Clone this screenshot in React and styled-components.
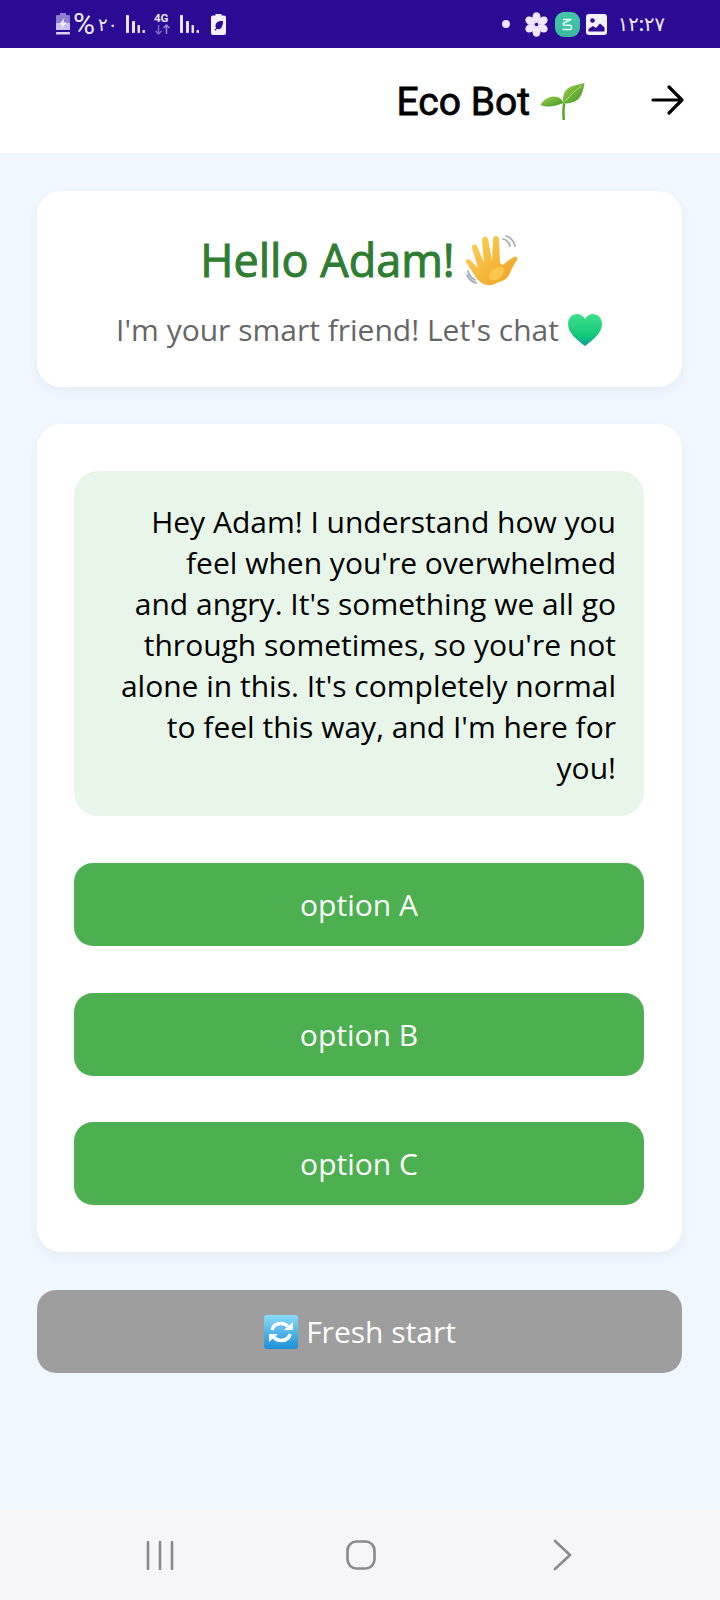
import React from "react";
import styled, { createGlobalStyle } from "styled-components";

const Global = createGlobalStyle`
  html, body { margin: 0; padding: 0; background: #f0f7ff; }
  * { box-sizing: border-box; }
  #root { width: 720px; height: 1600px; }
`;
const Page = styled.div`
  width: 720px; height: 1600px; display: flex; flex-direction: column;
  background: #f0f7ff; font-family: "Open Sans", sans-serif;
`;
const StatusBar = styled.div`
  height: 48px; flex: none; background: #2b0a94; color: #f1ecff;
  display: flex; align-items: center; justify-content: space-between;
  padding: 0 55px 0 55px; font-family: "Roboto", sans-serif;
`;
const StatusGroup = styled.div`
  display: flex; align-items: center;
`;
const Slot = styled.span`
  display: flex; align-items: center; margin-left: ${p => p.$ml || 0}px;
`;
const Percent = styled.span`
  font-size: 30px; line-height: 48px; font-family: "Roboto", sans-serif; margin-left: 2px;
`;
const Digits = styled.span`
  font-size: ${p => p.$size || 18}px; line-height: 48px; font-family: "Noto Sans", "DejaVu Sans", sans-serif;
  margin-left: ${p => p.$ml || 0}px; font-weight: 500;
`;
const Header = styled.header`
  height: 105px; flex: none; background: #fff;
  display: flex; align-items: center; justify-content: flex-end; padding: 0 35px 2px 0;
`;
const Title = styled.h1`
  margin: 4px 65px 0 0; font: 400 39px/48px "Roboto", sans-serif; color: #000;
  -webkit-text-stroke: 0.8px #000;
  display: flex; align-items: center; gap: 9px;
`;
const Main = styled.main`
  flex: 1; padding: 38px 38px 0 37px; display: flex; flex-direction: column; gap: 37px;
`;
const Card = styled.section`
  background: #fff; border-radius: 24px; box-shadow: 0 4px 12px rgba(0,0,0,.05);
`;
const Welcome = styled(Card)`
  height: 196px; display: flex; flex-direction: column; align-items: center; padding-top: 38px;
`;
const Hello = styled.h2`
  margin: 0; font: 400 45px/62px "Open Sans", sans-serif; color: #2e7d32;
  -webkit-text-stroke: 1px #2e7d32;
  display: flex; align-items: center; gap: 10px;
`;
const Sub = styled.p`
  margin: 19px 0 0; font: 400 30px/40px "Open Sans", sans-serif; color: #666;
  display: flex; align-items: center; gap: 8px;
`;
const Chat = styled(Card)`
  padding: 47px 38px 47px 37px; display: flex; flex-direction: column; gap: 47px;
`;
const Bubble = styled.div`
  background: #e8f5e9; border-radius: 24px; padding: 30px 28px 28px 29px;
  font: 400 30px/41px "Open Sans", sans-serif; color: #000; text-align: right;
`;
const Options = styled.div`
  display: flex; flex-direction: column; gap: 47px;
`;
const Option = styled.button`
  height: 83px; border: 0; border-radius: 19px; background: #4caf50; color: #fff;
  font: 400 30px/40px "Open Sans", sans-serif; width: 100%; padding: 0;
  &:last-child { margin-top: -1px; }
`;
const Reset = styled.button`
  height: 83px; border: 0; border-radius: 19px; background: #9e9e9e; color: #fff; margin-top: 1px;
  font: 400 30px/40px "Open Sans", sans-serif; width: 100%;
  display: flex; align-items: center; justify-content: center; gap: 7px; padding: 0;
`;
const NavBar = styled.nav`
  height: 90px; flex: none; background: #f6f6f9;
  display: flex; align-items: center; padding: 0 0 0 146px;
`;
const NavSlot = styled.div`
  display: flex; align-items: center; margin-right: ${p => p.$mr || 0}px;
`;

const Battery = () => (
  <svg width="16" height="24" viewBox="0 0 16 24">
    <path d="M5 1h6v2h3a1.500 1.500 0 0 1 1 1.500V18H1V4.500A1.500 1.500 0 0 1 2 3h3z" fill="#8f7fd0" />
    <path d="M1 11h14v7H1z" fill="#c9c0ee" />
    <path d="M9.500 6 4 12.500h3.500L6 17l6-6.500H8.500z" fill="#f4f0ff" />
    <rect x="1" y="20" width="14" height="2.500" rx=".6" fill="#d9d2f5" />
  </svg>
);
const Signal = () => (
  <svg width="19" height="20" viewBox="0 0 19 20" fill="#e9e4fb">
    <rect x="0" y="1" width="3" height="18" rx=".8" />
    <rect x="6" y="7" width="3" height="12" rx=".8" />
    <rect x="11.500" y="11" width="2.500" height="8" rx=".8" />
    <rect x="16.500" y="16" width="2.500" height="3" rx=".8" />
  </svg>
);
const FourG = () => (
  <svg width="18" height="24" viewBox="0 0 18 24">
    <text x="0" y="10" fontSize="11.500" fontWeight="700" fontFamily="Roboto, sans-serif" fill="#ece7fc">4G</text>
    <path d="M4.500 13v9M1.500 19l3 3 3-3" fill="none" stroke="#7d67c6" strokeWidth="1.500" />
    <path d="M12.500 22v-9M9.500 16l3-3 3 3" fill="none" stroke="#9a88d6" strokeWidth="1.500" />
  </svg>
);
const LeafBattery = () => (
  <svg width="15" height="21" viewBox="0 0 15 21">
    <path d="M4.500 0h6v1.500h2.500a2 2 0 0 1 2 2V19a2 2 0 0 1-2 2H2a2 2 0 0 1-2-2V3.500a2 2 0 0 1 2-2h2.500z" fill="#f4f0ff" />
    <path d="M12 7c-4.500-.3-7.500 1.300-7.500 5 0 .8.200 1.500.6 2l-1.600 2 .8.700 1.600-2c2.800 1.500 6.100-.5 6.100-7.700z" fill="#2b0a94" />
  </svg>
);
const Flower = () => (
  <svg width="25" height="25" viewBox="0 0 25 25" fill="#ece7fc">
    {[0, 60, 120, 180, 240, 300].map(a => (
      <ellipse key={a} cx="12.500" cy="5" rx="4" ry="4.800" transform={`rotate(${a} 12.500 12.500)`} />
    ))}
    <circle cx="12.500" cy="12.500" r="3.500" fill="#ece7fc" />
    <circle cx="12.500" cy="12.500" r="1.800" fill="#2b0a94" />
  </svg>
);
const Sapp = () => (
  <svg width="25" height="25" viewBox="0 0 25 25">
    <defs>
      <linearGradient id="sapp" x1="0" y1="0" x2="0" y2="1">
        <stop offset="0" stopColor="#43c7a8" /><stop offset="1" stopColor="#3bb89f" />
      </linearGradient>
    </defs>
    <rect width="25" height="25" rx="9" fill="url(#sapp)" />
    <path d="M8 7.500h8.500M16 7.500 9 11c-1.500.8-.8 2.300.5 2.300h5c2.800 0 2.800 4.200 0 4.200H7.500" fill="none" stroke="#e6fff7" strokeWidth="1.500" strokeLinejoin="round" />
  </svg>
);
const Gallery = () => (
  <svg width="21" height="21" viewBox="0 0 21 21">
    <rect width="21" height="21" rx="3" fill="#f4f0ff" />
    <circle cx="6.500" cy="6.500" r="2.300" fill="#2b0a94" />
    <path d="M2.500 17.500v-2.500l4.500-3 3 2 4-4.500 4.500 4v4z" fill="#2b0a94" />
  </svg>
);
const Arrow = () => (
  <svg width="34" height="34" viewBox="0 0 34 34" fill="none" stroke="#000" strokeWidth="3.200" strokeLinecap="round" strokeLinejoin="round">
    <path d="M2 17h29M18 4l13 13-13 13" />
  </svg>
);
const Sprout = () => (
  <svg width="47" height="40" viewBox="0 0 46 40">
    <defs>
      <linearGradient id="lf" x1="0" y1="0" x2="1" y2="1">
        <stop offset="0" stopColor="#9ed24a" /><stop offset="1" stopColor="#3f9428" />
      </linearGradient>
    </defs>
    <path d="M23 38c-.5-6-.5-12 .5-17l2.500.5c-1 5-1 11-.3 16.500z" fill="#5ba52f" />
    <path d="M1 23c3-6 10-10 17-8 3 1 5 3 6 6-7 3-16 5-23 2z" fill="url(#lf)" />
    <path d="M24 21c-2-8 2-15 9-17 4-1 8-2 12-3-1 7-3 15-9 18-4 2-8 3-12 2z" fill="url(#lf)" />
    <path d="M26 19C31 13 36 8 43 3" stroke="#cdea80" strokeWidth=".8" fill="none" />
  </svg>
);
const Wave = () => (
  <svg width="54" height="52" viewBox="0 0 54 52">
    <defs>
      <linearGradient id="hand" x1="0" y1="0" x2="1" y2="1">
        <stop offset="0" stopColor="#fdd35a" /><stop offset="1" stopColor="#f0a020" />
      </linearGradient>
    </defs>
    <path d="M38 5c4 1 6 3 7 7M41 2c4 1 8 5 9 10" fill="none" stroke="#a5a8b6" strokeWidth="1.800" strokeLinecap="round" />
    <path d="M3 37c1 4 3 7 7 9M2 41c2 4 5 7 9 8" fill="none" stroke="#a5a8b6" strokeWidth="1.800" strokeLinecap="round" />
    <path d="M27 51c-8 1-13-3-17-9L1 28c-1-2 2-4 4-2l8 8L7 14c-1-3 3-5 5-2l7 17-2-23c0-4 5-4 6-1l4 22 1-22c0-4 6-4 6 0l1 24 3 2c3-3 7-6 11-8 3-1 4 1 3 3-4 6-6 10-8 15-2 4-6 6-10 7z" fill="url(#hand)" />
    <path d="M32 46c-5 1-9-1-8-5 1-5 8-9 13-8 3 1 2 7-1 10z" fill="#fbc94f" opacity=".9" />
  </svg>
);
const Heart = () => (
  <svg width="36" height="34" viewBox="0 0 36 34">
    <defs>
      <linearGradient id="ht" x1="0" y1="0" x2="0" y2="1">
        <stop offset="0" stopColor="#3fe08c" /><stop offset=".7" stopColor="#10c878" /><stop offset="1" stopColor="#1098a0" />
      </linearGradient>
    </defs>
    <path d="M18 33C10 27 1 20 1 11 1 5 5 1 10 1c3.500 0 6.500 2 8 5 1.500-3 4.500-5 8-5 5 0 9 4 9 10 0 9-9 16-17 22z" fill="url(#ht)" />
  </svg>
);
const Refresh = () => (
  <svg width="36" height="36" viewBox="0 0 36 36">
    <defs>
      <linearGradient id="rf" x1="0" y1="0" x2="0" y2="1">
        <stop offset="0" stopColor="#8bdcf7" /><stop offset="1" stopColor="#1c8fd6" />
      </linearGradient>
    </defs>
    <rect x="1" y="1" width="34" height="34" rx="3" fill="url(#rf)" />
    <path d="M9 16c1-4.500 5-6.500 9-6.500 3 0 5 1 7 3" fill="none" stroke="#fff" strokeWidth="3.500" />
    <path d="M21 16h9V8z" fill="#fff" />
    <path d="M27 20c-1 4.500-5 6.500-9 6.500-3 0-5-1-7-3" fill="none" stroke="#fff" strokeWidth="3.500" />
    <path d="M15 20H6v8z" fill="#fff" />
  </svg>
);
const Bars = () => (
  <svg width="28" height="30" viewBox="0 0 28 30" stroke="#8a8a8a" strokeWidth="2.600" strokeLinecap="round">
    <path d="M2 2v27M14 2v27M26 2v27" />
  </svg>
);
const HomeIcon = () => (
  <svg width="30" height="30" viewBox="0 0 30 30" fill="none" stroke="#8a8a8a" strokeWidth="2.600">
    <rect x="1.500" y="1.500" width="27" height="27" rx="9" />
  </svg>
);
const Chevron = () => (
  <svg width="20" height="32" viewBox="0 0 20 32" fill="none" stroke="#8a8a8a" strokeWidth="2.600" strokeLinecap="round" strokeLinejoin="round">
    <path d="M3 2l15 14L3 30" />
  </svg>
);

export default function App() {
  return (
    <Page>
      <Global />
      <StatusBar>
        <StatusGroup>
          <Slot><Battery /></Slot>
          <Percent>%</Percent>
          <Digits $ml={3}>۲۰</Digits>
          <Slot $ml={9}><Signal /></Slot>
          <Slot $ml={9}><FourG /></Slot>
          <Slot $ml={8}><Signal /></Slot>
          <Slot $ml={12}><LeafBattery /></Slot>
        </StatusGroup>
        <StatusGroup>
          <svg width="8" height="8" viewBox="0 0 8 8"><circle cx="4" cy="4" r="4" fill="#ece7fc" /></svg>
          <Slot $ml={14}><Flower /></Slot>
          <Slot $ml={6}><Sapp /></Slot>
          <Slot $ml={6}><Gallery /></Slot>
          <Digits $size={19.500} $ml={11}>۱۲:۲۷</Digits>
        </StatusGroup>
      </StatusBar>
      <Header>
        <Title>Eco Bot <Sprout /></Title>
        <Arrow />
      </Header>
      <Main>
        <Welcome>
          <Hello>Hello Adam! <Wave /></Hello>
          <Sub>I'm your smart friend! Let's chat <Heart /></Sub>
        </Welcome>
        <Chat>
          <Bubble>
            Hey Adam! I understand how you feel when you're overwhelmed<br />and angry. It's something we all go through sometimes, so you're not alone in this. It's completely normal to feel this way, and I'm here for you!
          </Bubble>
          <Options>
            <Option>option A</Option>
            <Option>option B</Option>
            <Option>option C</Option>
          </Options>
        </Chat>
        <Reset><Refresh /> Fresh start</Reset>
      </Main>
      <NavBar>
        <NavSlot $mr={172}><Bars /></NavSlot>
        <NavSlot $mr={176}><HomeIcon /></NavSlot>
        <NavSlot><Chevron /></NavSlot>
      </NavBar>
    </Page>
  );
}
